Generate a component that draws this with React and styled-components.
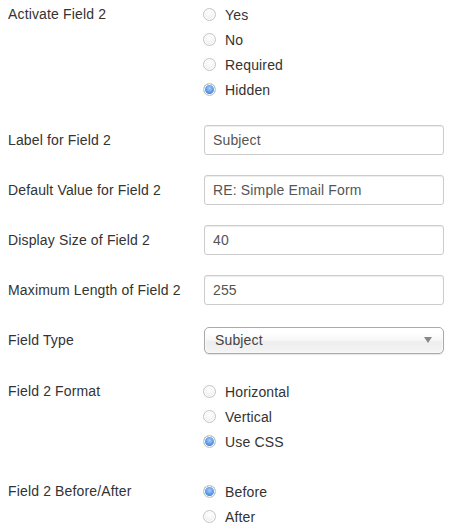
import styled, { createGlobalStyle } from 'styled-components';

const GlobalStyle = createGlobalStyle`
  body {
    margin: 0;
    background: #fff;
    font-family: "Liberation Sans", Arial, sans-serif;
    font-size: 14px;
    letter-spacing: 0.15px;
    color: #333;
  }
`;

const Form = styled.div`
  padding: 0 8px;
`;

const Group = styled.div`
  display: flex;
  align-items: ${(p) => (p.$top ? 'flex-start' : 'center')};
  margin-bottom: ${(p) => p.$gap}px;
`;

const Label = styled.div`
  width: 196px;
  flex-shrink: 0;
  line-height: ${(p) => (p.$top ? '25px' : '20px')};
  padding-top: ${(p) => (p.$top ? '2px' : '0')};
`;

const RadioList = styled.div`
  padding-top: 2px;
  display: flex;
  flex-direction: column;
`;

const RadioItem = styled.label`
  display: flex;
  align-items: center;
  height: 25px;
  color: #333;
`;

const Dot = styled.span`
  box-sizing: border-box;
  width: 13px;
  height: 13px;
  margin: 0 9px 0 -1px;
  border-radius: 50%;
  border: 1px solid #c4c4c4;
  background: ${(p) =>
    p.$checked
      ? 'radial-gradient(circle at 50% 40%, #a9cdf7 0%, #5f9ae6 45%, #3b78cf 70%, #2d62b4 72%, #dcdcdc 78%)'
      : 'radial-gradient(circle at 50% 35%, #ffffff 0%, #f4f4f4 50%, #e2e2e2 100%)'};
  box-shadow: inset 0 0 0 1px #fff;
`;

const TextInput = styled.div`
  box-sizing: border-box;
  width: 240px;
  height: 30px;
  padding: 0 8px;
  display: flex;
  align-items: center;
  border: 1px solid #ccc;
  border-radius: 3px;
  box-shadow: inset 0 1px 1px rgba(0, 0, 0, 0.075);
  color: #555;
`;

const SelectRow = styled.div`
  height: 30px;
  display: flex;
  align-items: center;
`;

const Select = styled.div`
  box-sizing: border-box;
  width: 240px;
  height: 27px;
  padding: 0 10px;
  display: flex;
  align-items: center;
  justify-content: space-between;
  border: 1px solid #aaa;
  border-radius: 5px;
  background: linear-gradient(#ffffff 20%, #f6f6f6 50%, #eeeeee 52%, #f4f4f4 100%);
  box-shadow: inset 0 0 3px #fff, 0 1px 1px rgba(0, 0, 0, 0.1);
  color: #444;
`;

const Arrow = styled.span`
  width: 0;
  height: 0;
  margin-right: 1px;
  border-left: 4px solid transparent;
  border-right: 4px solid transparent;
  border-top: 6px solid #888;
`;

const Radios = ({ options, value }) => (
  <RadioList>
    {options.map((o) => (
      <RadioItem key={o}>
        <Dot $checked={o === value} />
        {o}
      </RadioItem>
    ))}
  </RadioList>
);

const RadioGroup = ({ label, options, value, gap }) => (
  <Group $top $gap={gap}>
    <Label $top>{label}</Label>
    <Radios options={options} value={value} />
  </Group>
);

const InputGroup = ({ label, value }) => (
  <Group $gap={20}>
    <Label>{label}</Label>
    <TextInput>{value}</TextInput>
  </Group>
);

export default function App() {
  return (
    <>
      <GlobalStyle />
      <Form>
        <RadioGroup
          label="Activate Field 2"
          options={['Yes', 'No', 'Required', 'Hidden']}
          value="Hidden"
          gap={23}
        />
        <InputGroup label="Label for Field 2" value="Subject" />
        <InputGroup label="Default Value for Field 2" value="RE: Simple Email Form" />
        <InputGroup label="Display Size of Field 2" value="40" />
        <InputGroup label="Maximum Length of Field 2" value="255" />
        <Group $gap={22}>
          <Label>Field Type</Label>
          <SelectRow>
            <Select>
              Subject
              <Arrow />
            </Select>
          </SelectRow>
        </Group>
        <RadioGroup
          label="Field 2 Format"
          options={['Horizontal', 'Vertical', 'Use CSS']}
          value="Use CSS"
          gap={23}
        />
        <RadioGroup
          label="Field 2 Before/After"
          options={['Before', 'After']}
          value="Before"
          gap={0}
        />
      </Form>
    </>
  );
}
